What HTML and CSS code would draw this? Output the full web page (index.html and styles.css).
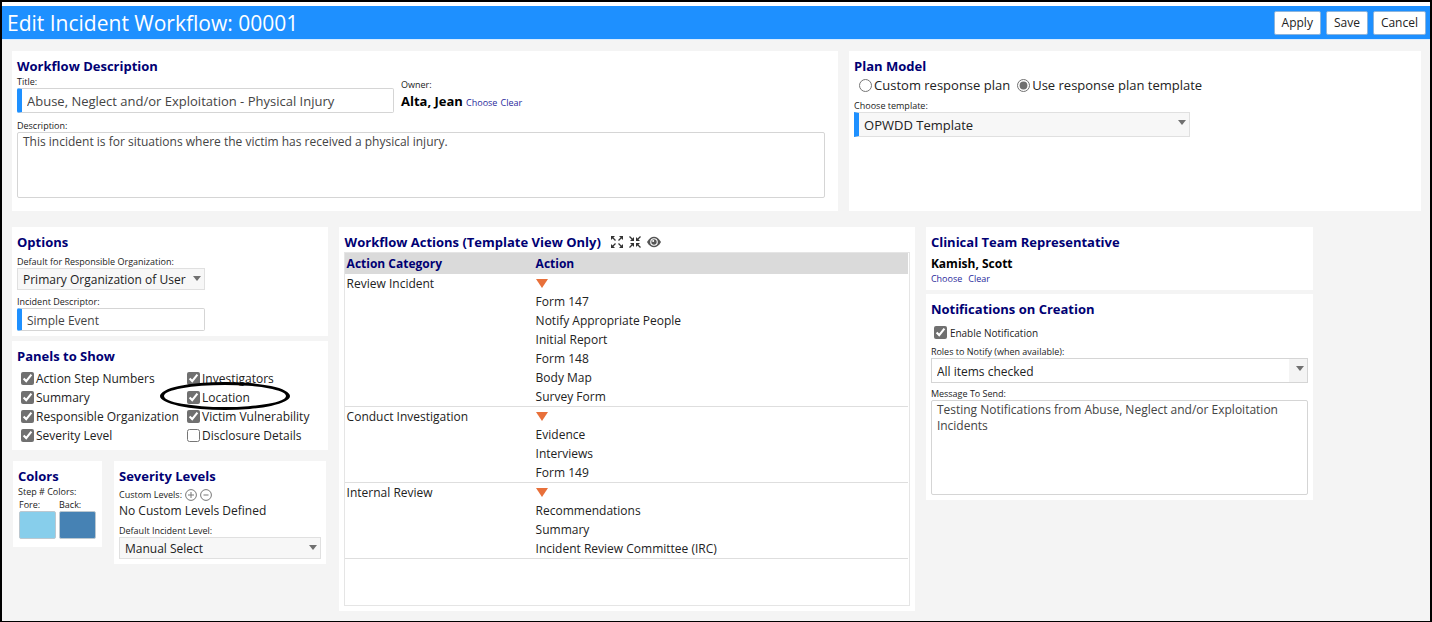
FILE: index.html
```html
<!DOCTYPE html>
<html lang="en">
<head>
    <meta charset="UTF-8">
    <meta name="viewport" content="width=device-width, initial-scale=1.0">
    <title>Edit Incident Workflow</title>
    <link rel="stylesheet" href="styles.css">
</head>
<body>
    <header class="topbar">
        <h1 class="page-title">Edit Incident Workflow: 00001</h1>
        <div class="actions">
            <button type="button" class="btn">Apply</button>
            <button type="button" class="btn">Save</button>
            <button type="button" class="btn">Cancel</button>
        </div>
    </header>
    <main class="content">
        <div class="row-top">
            <section class="panel">
                <h2>Workflow Description</h2>
                <div class="title-row">
                    <div class="field title-field">
                        <label for="title">Title:</label>
                        <input type="text" id="title" class="textbox required tall" value="Abuse, Neglect and/or Exploitation - Physical Injury">
                    </div>
                    <div class="owner">
                        <p class="caption">Owner:</p>
                        <p><b>Alta, Jean</b> <a href="#">Choose</a> <a href="#">Clear</a></p>
                    </div>
                </div>
                <div class="field desc-field">
                    <label for="description">Description:</label>
                    <textarea id="description" class="desc-box">This incident is for situations where the victim has received a physical injury.</textarea>
                </div>
            </section>
            <section class="panel">
                <h2>Plan Model</h2>
                <div class="radios">
                    <label><input type="radio" name="plan">Custom response plan</label>
                    <label><input type="radio" name="plan" checked>Use response plan template</label>
                </div>
                <div class="field template-field">
                    <label for="template">Choose template:</label>
                    <div class="select">
                        <select id="template" class="required tall">
                            <option>OPWDD Template</option>
                        </select>
                    </div>
                </div>
            </section>
        </div>

        <div class="row-main">
            <div class="col-left">
                <section class="panel options">
                    <h2>Options</h2>
                    <div class="field">
                        <label for="org">Default for Responsible Organization:</label>
                        <div class="select">
                            <select id="org">
                                <option>Primary Organization of User</option>
                            </select>
                        </div>
                    </div>
                    <div class="field">
                        <label for="descriptor">Incident Descriptor:</label>
                        <input type="text" id="descriptor" class="textbox required" value="Simple Event">
                    </div>
                </section>
                <section class="panel">
                    <h2>Panels to Show</h2>
                    <div class="checks">
                        <label><input type="checkbox" checked>Action Step Numbers</label>
                        <label><input type="checkbox" checked>Investigators</label>
                        <label><input type="checkbox" checked>Summary</label>
                        <label class="circled"><input type="checkbox" checked>Location</label>
                        <label><input type="checkbox" checked>Responsible Organization</label>
                        <label><input type="checkbox" checked>Victim Vulnerability</label>
                        <label><input type="checkbox" checked>Severity Level</label>
                        <label><input type="checkbox">Disclosure Details</label>
                    </div>
                </section>
                <div class="row-bottom">
                    <section class="panel colors">
                        <h2>Colors</h2>
                        <p class="caption">Step # Colors:</p>
                        <div class="swatches">
                            <label>Fore:<input type="color" value="#87ceeb"></label>
                            <label>Back:<input type="color" value="#4682b4"></label>
                        </div>
                    </section>
                    <section class="panel severity">
                        <h2>Severity Levels</h2>
                        <div class="levels">
                            <span class="caption">Custom Levels:</span>
                            <button type="button" class="icon-btn" aria-label="Add level">
                                <svg width="12" height="12" viewBox="0 0 12 12" fill="none" stroke="#777">
                                    <circle cx="6" cy="6" r="5.4"/>
                                    <path d="M3 6h6M6 3v6"/>
                                </svg>
                            </button>
                            <button type="button" class="icon-btn" aria-label="Remove level">
                                <svg width="12" height="12" viewBox="0 0 12 12" fill="none" stroke="#777">
                                    <circle cx="6" cy="6" r="5.4"/>
                                    <path d="M3.5 6h5"/>
                                </svg>
                            </button>
                        </div>
                        <p>No Custom Levels Defined</p>
                        <div class="field">
                            <label for="level">Default Incident Level:</label>
                            <div class="select">
                                <select id="level">
                                    <option>Manual Select</option>
                                </select>
                            </div>
                        </div>
                    </section>
                </div>
            </div>

            <section class="panel workflow">
                <div class="heading-row">
                    <h2>Workflow Actions (Template View Only)</h2>
                    <button type="button" class="icon-btn" aria-label="Expand all">
                        <svg width="12" height="12" viewBox="0 0 12 12" fill="#333" stroke="#333" stroke-width="1.3">
                            <path d="M1.5 1.5l3 3M10.5 1.5l-3 3M1.5 10.5l3-3M10.5 10.5l-3-3"/>
                            <path stroke="none" d="M0 0h4L0 4zM12 0v4L8 0zM0 12V8l4 4zM12 12H8l4-4z"/>
                        </svg>
                    </button>
                    <button type="button" class="icon-btn" aria-label="Collapse all">
                        <svg width="12" height="12" viewBox="0 0 12 12" fill="#333" stroke="#333" stroke-width="1.3">
                            <path d="M.5.5L4 4M11.5.5L8 4M.5 11.5L4 8M11.5 11.5L8 8"/>
                            <path stroke="none" d="M5 1v4H1zM7 1v4h4zM5 11V7H1zM7 11V7h4z"/>
                        </svg>
                    </button>
                    <button type="button" class="icon-btn" aria-label="View">
                        <svg width="14" height="12" viewBox="0 0 14 12">
                            <path fill="#555" d="M0 6C2 2.3 4.5.7 7 .7s5 1.600 7 5.300c-2 3.700-4.500 5.300-7 5.300S2 9.700 0 6z"/>
                            <circle cx="7" cy="6" r="3.8" fill="#fff"/>
                            <circle cx="7" cy="6" r="2.700" fill="#555"/>
                            <circle cx="6.200" cy="5" r="1" fill="#fff"/>
                        </svg>
                    </button>
                </div>
                <div class="grid-box">
                    <table class="grid">
                        <thead>
                            <tr><th class="cat">Action Category</th><th>Action</th></tr>
                        </thead>
                        <tbody>
                            <tr>
                                <td>Review Incident</td>
                                <td>
                                    <button type="button" class="toggle" aria-label="Collapse"></button>
                                    <ul>
                                        <li>Form 147</li>
                                        <li>Notify Appropriate People</li>
                                        <li>Initial Report</li>
                                        <li>Form 148</li>
                                        <li>Body Map</li>
                                        <li>Survey Form</li>
                                    </ul>
                                </td>
                            </tr>
                            <tr>
                                <td>Conduct Investigation</td>
                                <td>
                                    <button type="button" class="toggle" aria-label="Collapse"></button>
                                    <ul>
                                        <li>Evidence</li>
                                        <li>Interviews</li>
                                        <li>Form 149</li>
                                    </ul>
                                </td>
                            </tr>
                            <tr>
                                <td>Internal Review</td>
                                <td>
                                    <button type="button" class="toggle" aria-label="Collapse"></button>
                                    <ul>
                                        <li>Recommendations</li>
                                        <li>Summary</li>
                                        <li>Incident Review Committee (IRC)</li>
                                    </ul>
                                </td>
                            </tr>
                        </tbody>
                    </table>
                </div>
            </section>

            <div class="col-right">
                <section class="panel rep">
                    <h2>Clinical Team Representative</h2>
                    <p><b>Kamish, Scott</b></p>
                    <div class="rep-links"><a href="#">Choose</a><a href="#">Clear</a></div>
                </section>
                <section class="panel notify">
                    <h2>Notifications on Creation</h2>
                    <label class="enable"><input type="checkbox" checked><span>Enable Notification</span></label>
                    <div class="field">
                        <label for="roles">Roles to Notify (when available):</label>
                        <div class="select light">
                            <select id="roles" class="tall">
                                <option>All items checked</option>
                            </select>
                        </div>
                    </div>
                    <div class="field">
                        <label for="message">Message To Send:</label>
                        <textarea id="message" class="message-box">Testing Notifications from Abuse, Neglect and/or Exploitation Incidents</textarea>
                    </div>
                </section>
            </div>
        </div>
    </main>
</body>
</html>
```
FILE: styles.css
```css
*, *::before, *::after {
    box-sizing: border-box;
}

body {
    margin: 0;
    min-height: 100vh;
    border: 2px solid #000;
    border-bottom-width: 1px;
    background-color: #f4f4f4;
    font-family: "Open Sans", "Noto Sans", sans-serif;
    font-size: 12px;
    line-height: 16px;
    color: #222;
}

h1, h2, p, ul {
    margin: 0;
    padding: 0;
}

ul {
    list-style: none;
}

input, select, textarea, button {
    font: inherit;
    color: inherit;
    margin: 0;
}

input[type="checkbox"], input[type="radio"] {
    width: 13px;
    height: 13px;
    flex: none;
    accent-color: #707070;
}

h2 {
    font-size: 13px;
    line-height: 20px;
    color: #000073;
}

b {
    color: #000;
}

a {
    font-size: 9px;
    color: #2a2a9c;
    text-decoration: none;
}

/* header */
.topbar {
    display: flex;
    justify-content: space-between;
    align-items: center;
    height: 38px;
    padding: 0 4px 0 5px;
    background-color: #1e90ff;
    border-top: 4px solid #fff;
    border-bottom: 1px solid #d9ecff;
}

.page-title {
    font-size: 21px;
    font-weight: normal;
    line-height: 30px;
    color: #fff;
}

.actions {
    display: flex;
    gap: 5px;
}

.btn {
    height: 24px;
    padding: 1px 7px 0;
    background-color: #fff;
    border: 1px solid #8cb4dc;
    border-radius: 2px;
}

/* layout */
.content {
    padding: 11px 9px 8px 10px;
}

.row-top {
    display: grid;
    grid-template-columns: 13fr 9fr;
    gap: 11px;
    margin-bottom: 16px;
}

.row-main {
    display: grid;
    grid-template-columns: 22.4% 40.9% 27.5%;
    gap: 11px;
    align-items: start;
}

.col-left, .col-right {
    display: flex;
    flex-direction: column;
    gap: 5px;
}

.row-bottom {
    display: flex;
    align-items: flex-start;
    gap: 12px;
    padding: 6px 2px 0 1px;
}

.panel {
    padding: 5px;
    background-color: #fff;
}

/* fields */
.field label, .caption, .swatches label {
    display: block;
    font-size: 9px;
    line-height: 12px;
}

.textbox, textarea, select {
    display: block;
    width: 100%;
    border: 1px solid #d5d5d5;
    border-radius: 2px;
    background-color: #fff;
}

.textbox {
    height: 23px;
    padding: 2px 5px 0;
    color: #444;
}

select {
    height: 22px;
    padding: 2px 5px 0;
    appearance: none;
    background-color: #f7f7f7;
    border-color: #e0e0e0;
    border-radius: 0;
}

.tall {
    height: 25px;
}

.required {
    border-left: 5px solid #1e90ff;
}

.required.tall {
    padding-top: 0;
    font-size: 13px;
}

textarea {
    padding: 1px 5px;
    resize: none;
    color: #444;
}

.select {
    position: relative;
}

.select::after {
    content: "";
    position: absolute;
    right: 4px;
    top: 8px;
    border: 4px solid transparent;
    border-top: 5px solid #707070;
    border-bottom: 0;
    pointer-events: none;
}

.light select {
    background: linear-gradient(to left, #f4f4f4 18px, #fff 18px);
    border-color: #d5d5d5;
}

/* workflow description */
.title-row {
    display: flex;
    align-items: flex-end;
    gap: 7px;
}

.title-field {
    width: 377px;
}

.owner p:last-child {
    line-height: 20px;
}

.owner b {
    font-size: 13px;
}

.desc-field {
    margin: 7px 8px 8px 0;
}

.desc-box {
    height: 66px;
}

/* plan model */
.radios {
    display: flex;
    gap: 7px;
    padding-left: 5px;
    font-size: 13px;
    line-height: 19px;
}

.radios label {
    display: flex;
    align-items: center;
    gap: 2px;
}

.template-field {
    width: 336px;
    margin-top: 5px;
}

/* left column */
.options .field {
    width: 188px;
    margin-top: 4px;
}

.options .field + .field {
    margin-top: 6px;
}

.checks {
    display: grid;
    grid-template-columns: 166px 1fr;
    padding: 3px 0 0 4px;
}

.checks label {
    display: flex;
    align-items: center;
    gap: 2px;
    line-height: 19px;
    white-space: nowrap;
}

.circled {
    position: relative;
}

/* hand-drawn style ring round the Location option */
.circled::after {
    content: "";
    position: absolute;
    left: -27px;
    top: -6px;
    width: 130px;
    height: 28px;
    border: 3px solid #000;
    border-left-width: 4px;
    border-right-width: 4px;
    border-radius: 50%;
    pointer-events: none;
}

.colors {
    padding-bottom: 8px;
}

.swatches {
    display: flex;
    gap: 3px;
    padding: 1px 1px 0;
}

.swatches input {
    display: block;
    width: 37px;
    height: 28px;
    padding: 0;
    border: 0;
    background: none;
}

.swatches input::-webkit-color-swatch-wrapper {
    padding: 0;
}

.swatches input::-webkit-color-swatch {
    border: 1px solid #bcc8d0;
    border-radius: 2px;
}

.severity {
    flex: 1;
}

.levels {
    display: flex;
    align-items: center;
    gap: 3px;
    height: 17px;
}

.severity .field {
    margin-top: 6px;
}

.icon-btn {
    display: block;
    padding: 0;
    border: 0;
    background: none;
}

.icon-btn svg {
    display: block;
}

/* workflow actions */
.heading-row {
    display: flex;
    align-items: center;
    gap: 6px;
    padding-left: 1px;
}

.heading-row h2 {
    margin-right: 4px;
}

.grid-box {
    min-height: 354px;
    padding-right: 1px;
    border: 1px solid #e5e5e5;
}

.grid {
    width: 100%;
    border-collapse: collapse;
}

.grid th {
    height: 21px;
    padding: 0 2px;
    background-color: #dadada;
    text-align: left;
    line-height: 21px;
    color: #000073;
}

.grid .cat {
    width: 189px;
}

.grid td {
    padding: 0 2px;
    vertical-align: top;
    line-height: 19px;
    border-bottom: 1px solid #dedede;
}

.toggle {
    display: block;
    height: 18px;
    padding: 0;
    border: 0;
    background: none;
}

.toggle::before {
    content: "";
    display: block;
    border: 6px solid transparent;
    border-top: 9px solid #e8703a;
    border-bottom: 0;
}

/* right column */
.col-right {
    gap: 4px;
}

.rep p {
    margin-top: 4px;
}

.rep-links {
    display: flex;
    gap: 6px;
    line-height: 13px;
}

.rep a {
    display: block;
}

.enable {
    display: flex;
    align-items: center;
    gap: 3px;
    height: 27px;
    padding-left: 3px;
}

.enable span {
    font-size: 10px;
}

.notify .field + .field {
    margin-top: 5px;
}

.message-box {
    height: 95px;
}
```
